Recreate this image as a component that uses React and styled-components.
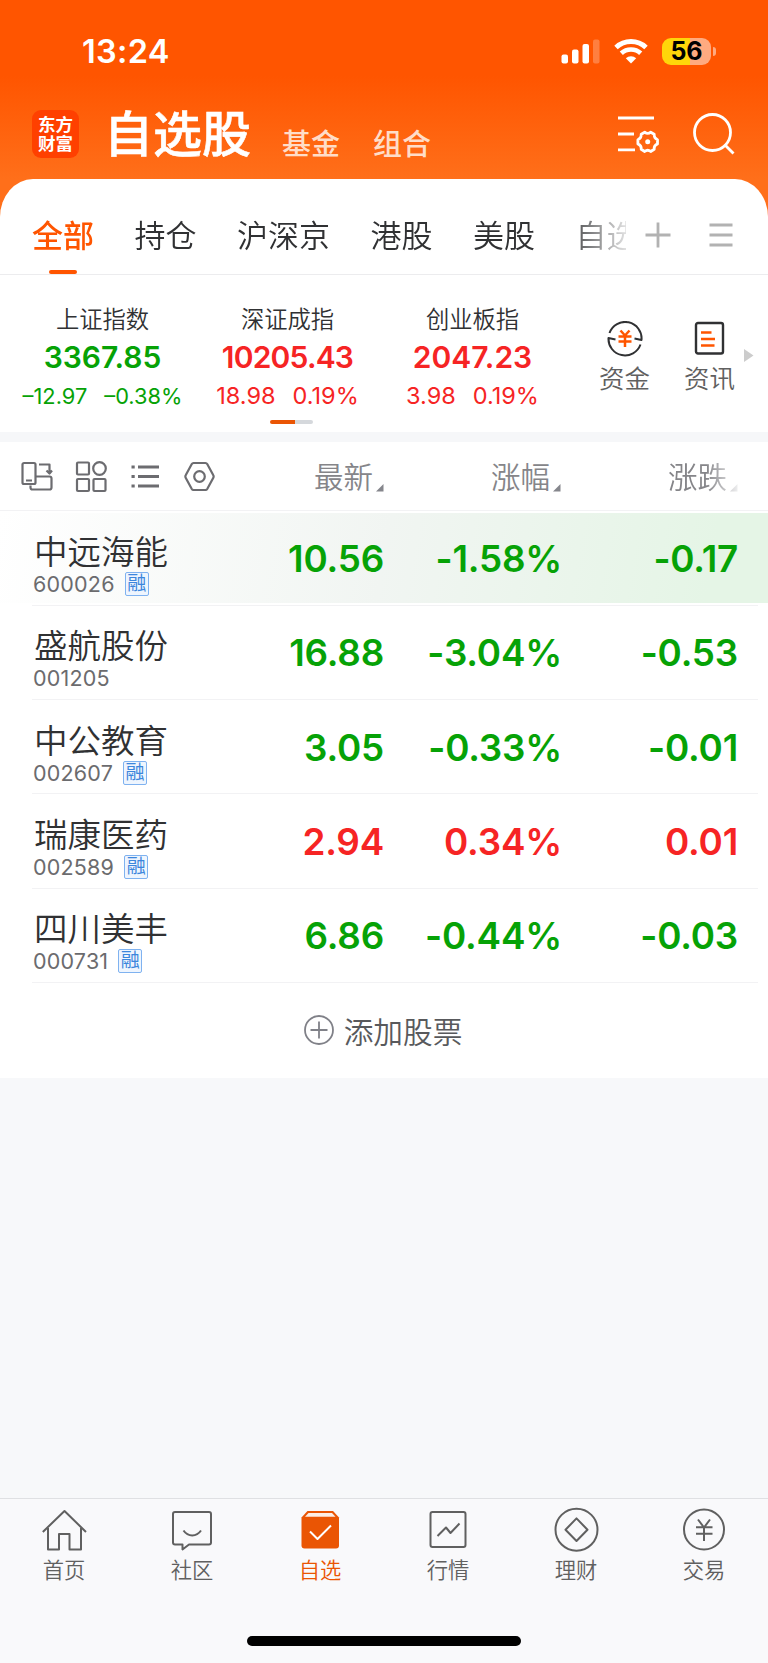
import React from 'react';
import styled, { createGlobalStyle } from 'styled-components';

const GlobalStyle = createGlobalStyle`
  * {
    box-sizing: border-box;
  }
  body {
    margin: 0;
    background-color: #f7f8fa;
    font-family: Inter, 'Noto Sans CJK SC', sans-serif;
    color: #333;
  }
`;

const GREEN = '#06a206';
const RED = '#f62424';
const ORANGE = '#ff5500';

const Page = styled.div`
  display: flex;
  flex-direction: column;
  width: 768px;
  height: 1663px;
  overflow: hidden;
  background: linear-gradient(#ff5500 76px, #ff6f1a 179px, #ff6f1a 230px, #f7f8fa 230px);
`;

const StatusBar = styled.div`
  display: flex;
  justify-content: space-between;
  align-items: center;
  height: 102px;
  padding: 0 52px 0 82px;
`;

const Time = styled.span`
  margin-top: 2px;
  font-size: 32.5px;
  font-weight: 600;
  line-height: 40px;
  letter-spacing: 0.3px;
  color: white;
`;

const StatusIcons = styled.div`
  display: flex;
  align-items: center;
`;

const Battery = styled.div`
  display: flex;
  justify-content: center;
  align-items: center;
  margin-left: 14px;
  width: 49px;
  height: 27px;
  border-radius: 9px;
  background: linear-gradient(90deg, #ffd60a 28px, #ffaa80 28px);
  font-size: 25px;
  font-weight: 700;
  color: black;
`;

const BatteryCap = styled.div`
  margin-left: 2px;
  width: 3px;
  height: 9px;
  border-radius: 0 4px 4px 0;
  background-color: #ffaa80;
`;

const Header = styled.header`
  display: flex;
  align-items: center;
  height: 77px;
  padding: 0 33px 14px 32px;
  color: white;
`;

const Logo = styled.div`
  display: grid;
  place-content: center;
  margin-top: 1px;
  width: 47px;
  height: 48px;
  border-radius: 9px;
  background-color: #ff4000;
  font-size: 17.5px;
  font-weight: 700;
  line-height: 19px;
`;

const Title = styled.h1`
  margin: 2px 0 0 25px;
  font-size: 49px;
  font-weight: 500;
  line-height: 62px;
  -webkit-text-stroke: 0.6px white;
`;

const SubTitle = styled.span`
  margin: 22px 0 0 ${({ $gap }) => $gap}px;
  font-size: 29px;
  font-weight: 500;
  line-height: 36px;
  color: #ffddc8;
`;

const HeaderIcons = styled.div`
  display: flex;
  gap: 33px;
  margin-left: auto;
`;

const Panel = styled.main`
  height: 899px;
  border-radius: 33px 33px 0 0 / 38px 38px 0 0;
  background-color: white;
`;

const Tabs = styled.nav`
  display: flex;
  align-items: center;
  height: 96px;
  padding: 0 35px 0 32px;
  border-bottom: 1px solid #ececee;
`;

const TabList = styled.div`
  display: flex;
  gap: 40.5px;
  width: 594px;
  height: 95px;
  overflow: hidden;
  white-space: nowrap;
  mask-image: linear-gradient(90deg, black 530px, transparent 605px);
`;

const Tab = styled.div`
  display: flex;
  flex-direction: column;
  align-items: center;
  padding-top: 35px;
  font-size: 31px;
  font-weight: ${({ $active }) => ($active ? 500 : 350)};
  line-height: 44px;
  color: ${({ $active }) => ($active ? ORANGE : '#303133')};
  &::after {
    content: '';
    display: ${({ $active }) => ($active ? 'block' : 'none')};
    margin-top: 12px;
    width: 28px;
    height: 4px;
    border-radius: 2px;
    background-color: ${ORANGE};
  }
`;

const TabIcons = styled.div`
  display: flex;
  align-items: center;
  justify-content: space-between;
  margin: 17px 0 0 19px;
  width: 88px;
`;

const Indices = styled.section`
  display: flex;
  height: 146px;
  padding-left: 10px;
`;

const IndexCard = styled.div`
  display: flex;
  flex-direction: column;
  align-items: center;
  width: 185px;
  padding-top: 28px;
  color: ${({ $color }) => $color};
`;

const IndexName = styled.span`
  font-size: 23.3px;
  font-weight: 350;
  line-height: 34px;
  color: #303133;
`;

const IndexValue = styled.span`
  margin-top: 1px;
  font-size: 30px;
  font-weight: 600;
  line-height: 38px;
  letter-spacing: ${({ $long }) => ($long ? '-0.8px' : 'normal')};
`;

const IndexChange = styled.div`
  display: flex;
  gap: 17px;
  margin-top: 5px;
  font-size: ${({ $small }) => ($small ? 21.8 : 23.5)}px;
  line-height: 30px;
`;

const Shortcuts = styled.div`
  display: flex;
  align-items: center;
  padding-left: 34px;
`;

const Shortcut = styled.div`
  display: flex;
  flex-direction: column;
  align-items: center;
  margin-right: 34px;
  padding-top: 21px;
  font-size: 25.5px;
  font-weight: 350;
  line-height: 36px;
  color: #606060;
  svg {
    margin-bottom: 4px;
  }
`;

const Pager = styled.div`
  margin: -1px 0 0 270px;
  width: 43px;
  height: 4px;
  border-radius: 2px;
  background: linear-gradient(90deg, #ea5504 25px, #d5d8dc 25px);
`;

const Separator = styled.div`
  margin-top: 8px;
  height: 10px;
  background-color: #f6f7f9;
`;

const ListHeader = styled.div`
  display: grid;
  grid-template-columns: 233px 151px 177px 177px;
  align-items: center;
  height: 69px;
  padding-top: 2px;
  border-bottom: 1px solid #f2f2f4;
`;

const Tools = styled.div`
  display: flex;
  gap: 22px;
  padding-left: 21px;
`;

const SortLabel = styled.div`
  display: flex;
  justify-content: flex-end;
  align-items: center;
  gap: 3px;
  font-size: 29.5px;
  font-weight: 350;
  line-height: 40px;
  color: #858589;
  mask-image: ${({ $faded }) =>
    $faded ? 'linear-gradient(90deg, black 145px, transparent 182px)' : 'none'};
  svg {
    margin-top: 22px;
  }
`;

const Rows = styled.div`
  padding-top: 2px;
`;

const Row = styled.div`
  display: grid;
  grid-template-columns: 352px 178px 176px;
  height: 94.3px;
  padding-left: 32px;
  background: ${({ $active }) =>
    $active
      ? 'linear-gradient(100deg, white, #f1f5f2 50%, #e5f5e6 92%) 0 0 / 100% 90px no-repeat'
      : 'none'};
  position: relative;
  &::after {
    content: '';
    position: absolute;
    right: 10px;
    bottom: 1.500px;
    left: 32px;
    height: 1px;
    background-color: #f2f2f4;
  }
`;

const Stock = styled.div`
  grid-row: 1;
  grid-column: 1;
  padding: 17px 0 0 1px;
`;

const StockName = styled.div`
  margin-left: 1px;
  font-size: 33.5px;
  font-weight: 350;
  line-height: 44px;
  color: #303133;
`;

const StockCode = styled.div`
  display: flex;
  align-items: center;
  gap: 10px;
  height: 24px;
  margin-top: -2px;
  font-size: 21.5px;
  line-height: 24px;
  letter-spacing: 0.2px;
  color: #6b6b6e;
`;

const MarginBadge = styled.span`
  width: 24px;
  height: 24px;
  border: 1px solid #7fb2f0;
  border-radius: 2px;
  background-color: #eef5fe;
  font-size: 19px;
  line-height: 21px;
  letter-spacing: 0;
  text-align: center;
  color: #3c86dc;
`;

const Figure = styled.div`
  grid-row: 1;
  grid-column: ${({ $column }) => $column};
  padding-top: 24px;
  text-align: right;
  font-size: 36.8px;
  font-weight: 600;
  line-height: 44px;
  letter-spacing: -0.2px;
  color: ${({ $color }) => $color};
`;

const AddStock = styled.div`
  display: flex;
  justify-content: center;
  align-items: center;
  gap: 10px;
  height: 92px;
  padding-right: 2px;
  font-size: 29.7px;
  font-weight: 350;
  color: #58595c;
`;

const TabBar = styled.footer`
  display: grid;
  grid-template-columns: repeat(6, 1fr);
  align-content: start;
  margin-top: auto;
  height: 165px;
  padding-top: 8px;
  border-top: 1px solid #dfe0e3;
  background-color: #f9f9fb;
`;

const TabItem = styled.div`
  display: flex;
  flex-direction: column;
  align-items: center;
  font-size: 21.3px;
  font-weight: 350;
  line-height: 30px;
  color: ${({ $active }) => ($active ? '#ea5504' : '#606060')};
  svg {
    margin-bottom: 3px;
  }
`;

const HomeIndicator = styled.div`
  grid-column: 1 / -1;
  justify-self: center;
  margin-top: 51px;
  width: 274px;
  height: 10px;
  border-radius: 5px;
  background-color: black;
`;

const tabs = ['全部', '持仓', '沪深京', '港股', '美股', '自选'];

const indices = [
  { name: '上证指数', value: '3367.85', change: '–12.97', rate: '–0.38%', color: GREEN },
  { name: '深证成指', value: '10205.43', change: '18.98', rate: '0.19%', color: RED },
  { name: '创业板指', value: '2047.23', change: '3.98', rate: '0.19%', color: RED },
];

const stocks = [
  { name: '中远海能', code: '600026', margin: true, figures: ['10.56', '-1.58%', '-0.17'], color: GREEN },
  { name: '盛航股份', code: '001205', margin: false, figures: ['16.88', '-3.04%', '-0.53'], color: GREEN },
  { name: '中公教育', code: '002607', margin: true, figures: ['3.05', '-0.33%', '-0.01'], color: GREEN },
  { name: '瑞康医药', code: '002589', margin: true, figures: ['2.94', '0.34%', '0.01'], color: RED },
  { name: '四川美丰', code: '000731', margin: true, figures: ['6.86', '-0.44%', '-0.03'], color: GREEN },
];

const Line = ({ w = 30, h = w, stroke = 2, color = 'currentColor', children }) => (
  <svg
    width={w}
    height={h}
    viewBox={`0 0 ${w} ${h}`}
    fill="none"
    stroke={color}
    strokeWidth={stroke}
    strokeLinejoin="round"
  >
    {children}
  </svg>
);

const SignalIcon = () => (
  <svg width="39" height="25" fill="white">
    <rect x="0.5" y="15.5" width="6.5" height="9" rx="2" />
    <rect x="11" y="10.5" width="6.5" height="14" rx="2" />
    <rect x="21.5" y="5" width="6.5" height="19.5" rx="2" />
    <rect x="32" y="0.5" width="6.5" height="24" rx="2" opacity="0.25" />
  </svg>
);

const Wifi = styled.svg`
  margin-left: 14px;
`;

const WifiIcon = () => (
  <Wifi width="34" height="25" viewBox="0 0 34 25" fill="none" stroke="white">
    <path d="M2 8.5a22 22 0 0 1 30 0" strokeWidth="5" />
    <path d="M7.3 14.3a14.2 14.2 0 0 1 19.4 0" strokeWidth="4.6" />
    <path d="M17 24.5l-5.2-5.2a7.5 7.5 0 0 1 10.4 0z" fill="white" stroke="none" />
  </Wifi>
);

const MoreArrow = styled.svg`
  margin: 74px 0 0 -25px;
`;

const SortCorner = () => (
  <svg width="8" height="8" fill="#85868c">
    <path d="M7.5 0v7.5H0z" />
  </svg>
);

const bottomTabs = [
  {
    label: '首页',
    icon: (
      <>
        <path d="M.8 25L22.5 4 44 25" />
        <path d="M6 21v21.500h11V27h10.500v15.500H39V21" />
      </>
    ),
  },
  {
    label: '社区',
    icon: (
      <>
        <path d="M5 5h34a2 2 0 0 1 2 2v28.500a2 2 0 0 1-2 2H19l-6.500 5v-5H5a2 2 0 0 1-2-2V7a2 2 0 0 1 2-2z" />
        <path d="M13.500 23.500c4.500 6.500 13 6.500 17.500 0" />
      </>
    ),
  },
  {
    label: '自选',
    icon: (
      <>
        <path
          d="M9.500 4h25.500l6 6.500v28a3 3 0 0 1-3 3H6.500a3 3 0 0 1-3-3v-28z"
          fill="currentColor"
          stroke="none"
        />
        <path d="M10.500 6h23.500l3.500 3.800H7z" fill="#fdeee5" stroke="none" />
        <path d="M12 24.500l7.500 7.500L33 18.500" stroke="#fff" />
      </>
    ),
  },
  {
    label: '行情',
    icon: (
      <>
        <rect x="4.500" y="5" width="35" height="35" rx="2" />
        <path d="M11.500 29l8.500-8.500 4.500 5.500 9-9.500" />
      </>
    ),
  },
  {
    label: '理财',
    icon: (
      <>
        <circle cx="22.500" cy="22.700" r="21" />
        <path d="M22.500 11.400l11 11.300-11 11.300-11-11.300z" />
      </>
    ),
  },
  {
    label: '交易',
    icon: (
      <>
        <circle cx="22" cy="22.500" r="20" />
        <path d="M16 12.500l6 8 6-8M22 20.500V34M14 20.200h16.500M14 26.700h16.500" />
      </>
    ),
  },
];

const App = () => (
  <Page>
    <GlobalStyle />
    <StatusBar>
      <Time>13:24</Time>
      <StatusIcons>
        <SignalIcon />
        <WifiIcon />
        <Battery>56</Battery>
        <BatteryCap />
      </StatusIcons>
    </StatusBar>

    <Header>
      <Logo>
        <span>东方</span>
        <span>财富</span>
      </Logo>
      <Title>自选股</Title>
      <SubTitle $gap={31}>基金</SubTitle>
      <SubTitle $gap={33}>组合</SubTitle>
      <HeaderIcons>
        <Line w={43} h={42} stroke={2.8}>
          <path d="M1 5h36M1 21h16M1 36.800h17" />
          <path d="M27.700 19.200q3 2.400 6 0l3.500 2q-.4 3.800 3.300 5.500v4.200q-3.700 1.600-3.300 5.400l-3.500 2.200q-3-2.400-6 0l-3.500-2.200q.4-3.800-3.300-5.400v-4.200q3.700-1.700 3.300-5.500z" />
          <circle cx="30.700" cy="28.800" r="2.500" fill="currentColor" stroke="none" />
        </Line>
        <Line w={42} h={42} stroke={2.8}>
          <circle cx="19.500" cy="19.500" r="18" />
          <path d="M31.500 31.500l9 9" />
        </Line>
      </HeaderIcons>
    </Header>

    <Panel>
      <Tabs>
        <TabList>
          {tabs.map((tab, i) => (
            <Tab key={tab} $active={i === 0}>
              {tab}
            </Tab>
          ))}
        </TabList>
        <TabIcons>
          <Line w={26} stroke={2.8} color="#b2b2b2">
            <path d="M13 .5v25M.5 13h25" />
          </Line>
          <Line w={24} h={26} stroke={2.8} color="#b2b2b2">
            <path d="M.5 3h23M.5 13h23M.5 23h23" />
          </Line>
        </TabIcons>
      </Tabs>

      <Indices>
        {indices.map((item) => (
          <IndexCard key={item.name} $color={item.color}>
            <IndexName>{item.name}</IndexName>
            <IndexValue $long={item.value.length > 7}>{item.value}</IndexValue>
            <IndexChange $small={item.change.length > 5}>
              <span>{item.change}</span>
              <span>{item.rate}</span>
            </IndexChange>
          </IndexCard>
        ))}
        <Shortcuts>
          <Shortcut>
            <Line w={36} color="#303133">
              <path d="M2.500 12A16.500 16.500 0 0 1 34.500 19l-7-1.500M33.500 23.500A16.500 16.500 0 0 1 1.500 17l7 1.500" />
              <path
                d="M13.500 9.500l4.500 5 4.500-5M11.500 15.500h13M11.500 20.500h13M18 14.500V26"
                stroke={ORANGE}
                strokeWidth="2.5"
              />
            </Line>
            资金
          </Shortcut>
          <Shortcut>
            <Line w={36} color="#303133" stroke={2.4}>
              <rect x="4" y="2" width="27" height="30.500" rx="2" />
              <path d="M9 11.500h10.500M9 18h14M9 24.500h13.500" stroke={ORANGE} strokeWidth="2.5" />
            </Line>
            资讯
          </Shortcut>
        </Shortcuts>
        <MoreArrow width="10" height="13" fill="#ccc">
          <path d="M0 0l9.500 6.500L0 13z" />
        </MoreArrow>
      </Indices>
      <Pager />
      <Separator />

      <ListHeader>
        <Tools>
          <Line w={32} color="#6c6c70" stroke={2.2}>
            <path d="M9.500 24.500v2a2 2 0 0 0 2 2h17a2 2 0 0 0 2-2v-9a2 2 0 0 0-2-2H15" />
            <rect x="1.500" y="2" width="13" height="21" rx="1.500" />
            <path d="M5 19.500h6M18 3.500h10.500v9M25.500 9.500l3 3 2.500-3" />
          </Line>
          <Line w={32} color="#6c6c70" stroke={2.2}>
            <rect x="2" y="1.500" width="12" height="12" rx="1" />
            <circle cx="24.500" cy="7.500" r="6.300" />
            <rect x="2" y="18" width="12" height="12" rx="1" />
            <rect x="18.500" y="18" width="12" height="12" rx="1" />
          </Line>
          <Line w={32} stroke={2.8} color="#6c6c70">
            <path d="M9 6h21M9 15.500h21M9 25h21M2.500 6h3.200M2.500 15.500h3.200M2.500 25h3.200" />
          </Line>
          <Line w={32} color="#6c6c70" stroke={2.2}>
            <path d="M10.500 2h12a2 2 0 0 1 1.700 1l6 11a3 3 0 0 1 0 3l-6 11a2 2 0 0 1-1.700 1h-12a2 2 0 0 1-1.700-1l-6-11a3 3 0 0 1 0-3l6-11a2 2 0 0 1 1.700-1z" />
            <circle cx="16.500" cy="15.500" r="5.300" />
          </Line>
        </Tools>
        <SortLabel>
          最新
          <SortCorner />
        </SortLabel>
        <SortLabel>
          涨幅
          <SortCorner />
        </SortLabel>
        <SortLabel $faded>
          涨跌
          <SortCorner />
        </SortLabel>
      </ListHeader>

      <Rows>
        {stocks.map((stock, i) => (
          <Row key={stock.code} $active={i === 0}>
            <Stock>
              <StockName>{stock.name}</StockName>
              <StockCode>
                {stock.code}
                {stock.margin && <MarginBadge>融</MarginBadge>}
              </StockCode>
            </Stock>
            {stock.figures.map((figure, n) => (
              <Figure key={figure} $column={n + 1} $color={stock.color}>
                {figure}
              </Figure>
            ))}
          </Row>
        ))}
      </Rows>

      <AddStock>
        <Line w={30} stroke={1.8} color="#808188">
          <circle cx="15" cy="15" r="14" />
          <path d="M15 6.500v17M6.500 15h17" />
        </Line>
        添加股票
      </AddStock>
    </Panel>

    <TabBar>
      {bottomTabs.map(({ label, icon }) => (
        <TabItem key={label} $active={label === '自选'}>
          <Line w={45}>{icon}</Line>
          {label}
        </TabItem>
      ))}
      <HomeIndicator />
    </TabBar>
  </Page>
);

export default App;
